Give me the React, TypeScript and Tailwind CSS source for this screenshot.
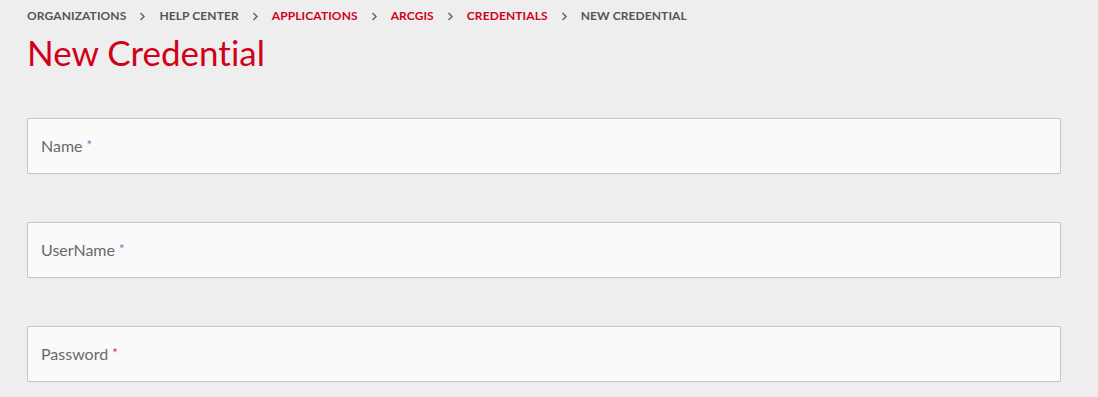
import React from 'react';

const crumbs = [
    { label: 'Organizations', active: false },
    { label: 'Help Center', active: false },
    { label: 'Applications', active: true },
    { label: 'ArcGIS', active: true },
    { label: 'Credentials', active: true },
    { label: 'New Credential', active: false },
];

const fields = [
    { label: 'Name', star: 'text-[#5b7fc7]' },
    { label: 'UserName', star: 'text-[#5b7fc7]' },
    { label: 'Password', star: 'text-[#c0394a]' },
];

const Chevron = () => (
    <svg width="7" height="9" viewBox="0 0 7 9" className="mx-[13px]">
        <path d="M1.5 1 L5 4.5 L1.5 8" fill="none" stroke="#666" strokeWidth="1.5" />
    </svg>
);

const App: React.FC = () => {
    return (
        <div
            className="min-h-[397px] bg-[#eeeeee] px-[27px] pt-[9px] [font-variant-ligatures:none]"
            style={{ fontFamily: 'Lato, "Open Sans", sans-serif' }}
        >
            <nav className="flex items-center h-[14px] text-[12px] font-bold uppercase tracking-[0.1px]">
                {crumbs.map((c, i) => (
                    <React.Fragment key={c.label}>
                        {i > 0 && <Chevron />}
                        <span className={c.active ? 'text-[#d0021b]' : 'text-[#555555]'}>{c.label}</span>
                    </React.Fragment>
                ))}
            </nav>

            <h1 className="mt-[9px] text-[35px] leading-[40px] text-[#d0021b] font-normal">New Credential</h1>

            <div className="mt-[46px] flex flex-col gap-[48px] w-[1034px]">
                {fields.map(f => (
                    <div
                        key={f.label}
                        className="h-[56px] bg-[#fafafa] border border-[#c6c6c6] rounded-[2px] flex items-center px-[13px] text-[16px] text-[#696969]"
                    >
                        {f.label}
                        <span className={`ml-[4px] text-[13px] ${f.star}`}>*</span>
                    </div>
                ))}
            </div>
        </div>
    );
};

export default App;
